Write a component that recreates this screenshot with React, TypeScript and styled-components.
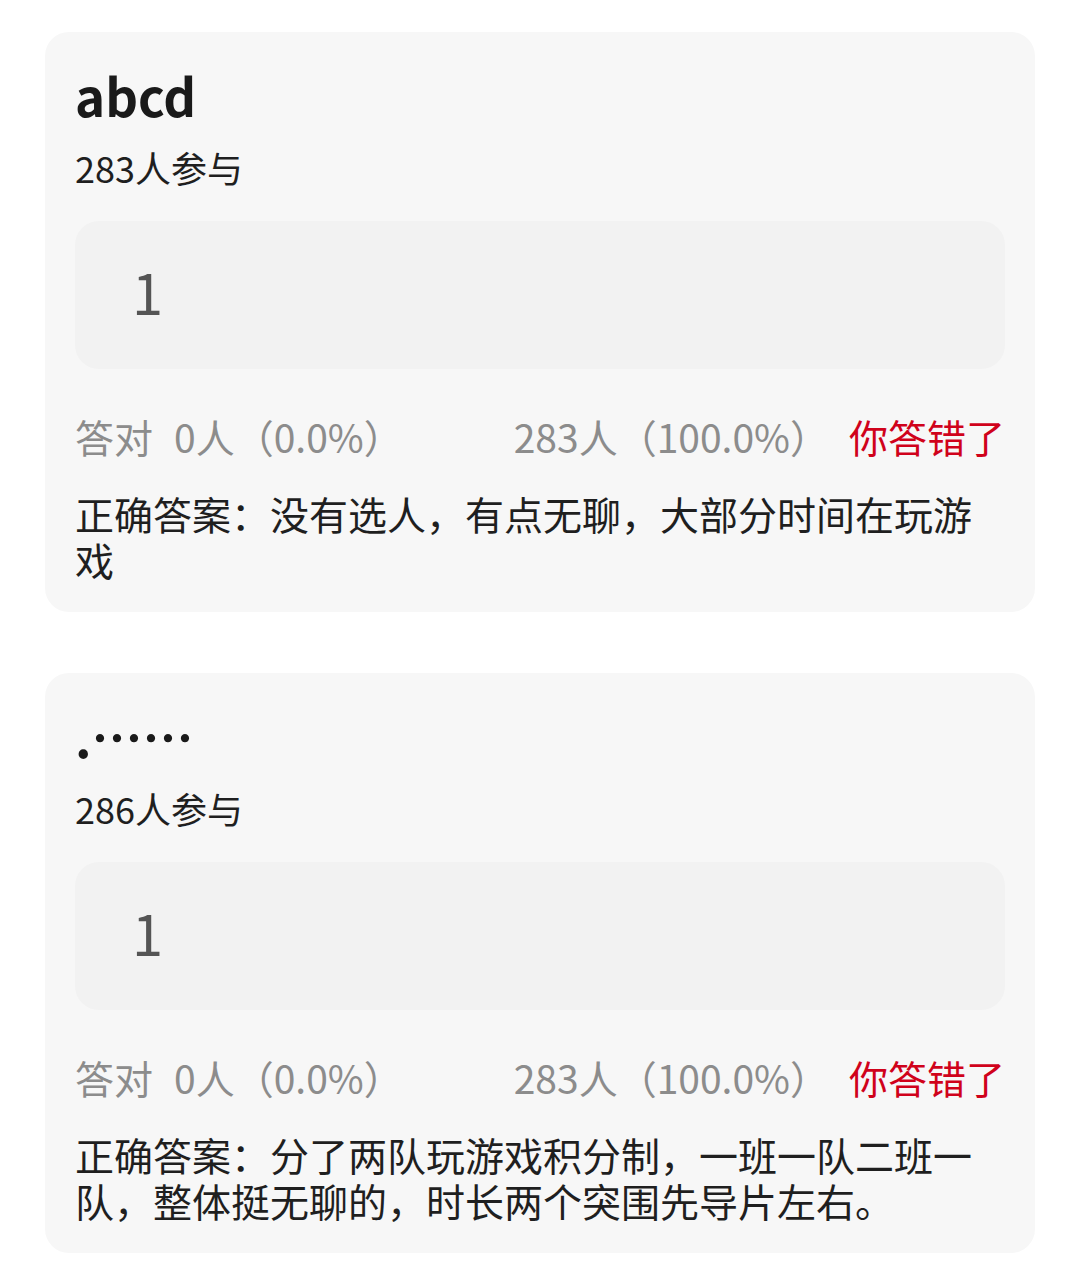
import React from 'react';
import styled, { createGlobalStyle } from 'styled-components';

// STYLES

const GlobalStyle = createGlobalStyle`
  html, body {
    margin: 0;
    padding: 0;
    background: #ffffff;
  }
  body {
    font-family: "Noto Sans CJK SC", "Noto Sans", sans-serif;
    -webkit-font-smoothing: antialiased;
  }
`

const Page = styled.div`
  display: flex;
  flex-direction: column;
  gap: 61px;
  padding: 32px 45px 20px;
`

const Card = styled.section`
  background-color: #f7f7f7;
  border-radius: 24px;
  padding: 30px 30px 30px;
  display: flex;
  flex-direction: column;
`

const Title = styled.h2`
  margin: 0;
  font-size: 51px;
  line-height: 66px;
  font-weight: 700;
  color: #1a1a1a;
`

const Joined = styled.p`
  margin: 15px 0 0;
  font-size: 36px;
  line-height: 48px;
  color: #1f1f1f;
`

const AnswerBox = styled.div`
  margin-top: 30px;
  height: 148px;
  box-sizing: border-box;
  border-radius: 24px;
  background-color: #f2f2f2;
  display: flex;
  align-items: center;
  padding: 0 0 10px 57px;
  font-size: 56px;
  color: #555555;
`

const StatRow = styled.div`
  margin-top: 41px;
  display: flex;
  align-items: baseline;
  font-size: 39px;
  line-height: 52px;
  color: #8c8c8c;
  white-space: nowrap;
`

const StatLabel = styled.span`
  margin-right: 21px;
`

const Spacer = styled.span`
  flex: 1;
`

const Verdict = styled.span`
  margin-left: 20px;
  color: #d0021b;
`

const CorrectAnswer = styled.p`
  margin: 28px 0 0;
  font-size: 39px;
  line-height: 46px;
  color: #1f1f1f;
`

////////////////////////////////////////////////////////////////////////////////

interface IQuestion {
    title: string;
    joined: number;
    answer: string;
    right: string;
    wrong: string;
    correct: string;
}

const questions: IQuestion[] = [
    {
        title: 'abcd',
        joined: 283,
        answer: '1',
        right: '0人（0.0%）',
        wrong: '283人（100.0%）',
        correct: '没有选人，有点无聊，大部分时间在玩游戏',
    },
    {
        title: '.……',
        joined: 286,
        answer: '1',
        right: '0人（0.0%）',
        wrong: '283人（100.0%）',
        correct: '分了两队玩游戏积分制，一班一队二班一队，整体挺无聊的，时长两个突围先导片左右。',
    },
]

const QuestionCard: React.FunctionComponent<{ q: IQuestion }> = ({ q }) => (
    <Card>
        <Title>{q.title}</Title>
        <Joined>{`${q.joined}人参与`}</Joined>
        <AnswerBox>{q.answer}</AnswerBox>
        <StatRow>
            <StatLabel>答对</StatLabel>
            <span>{q.right}</span>
            <Spacer />
            <span>{q.wrong}</span>
            <Verdict>你答错了</Verdict>
        </StatRow>
        <CorrectAnswer>{`正确答案：${q.correct}`}</CorrectAnswer>
    </Card>
)

export default function App() {
    return (
        <>
            <GlobalStyle />
            <Page lang="zh-CN">
                {questions.map((q, i) => <QuestionCard key={i} q={q} />)}
            </Page>
        </>
    )
}
